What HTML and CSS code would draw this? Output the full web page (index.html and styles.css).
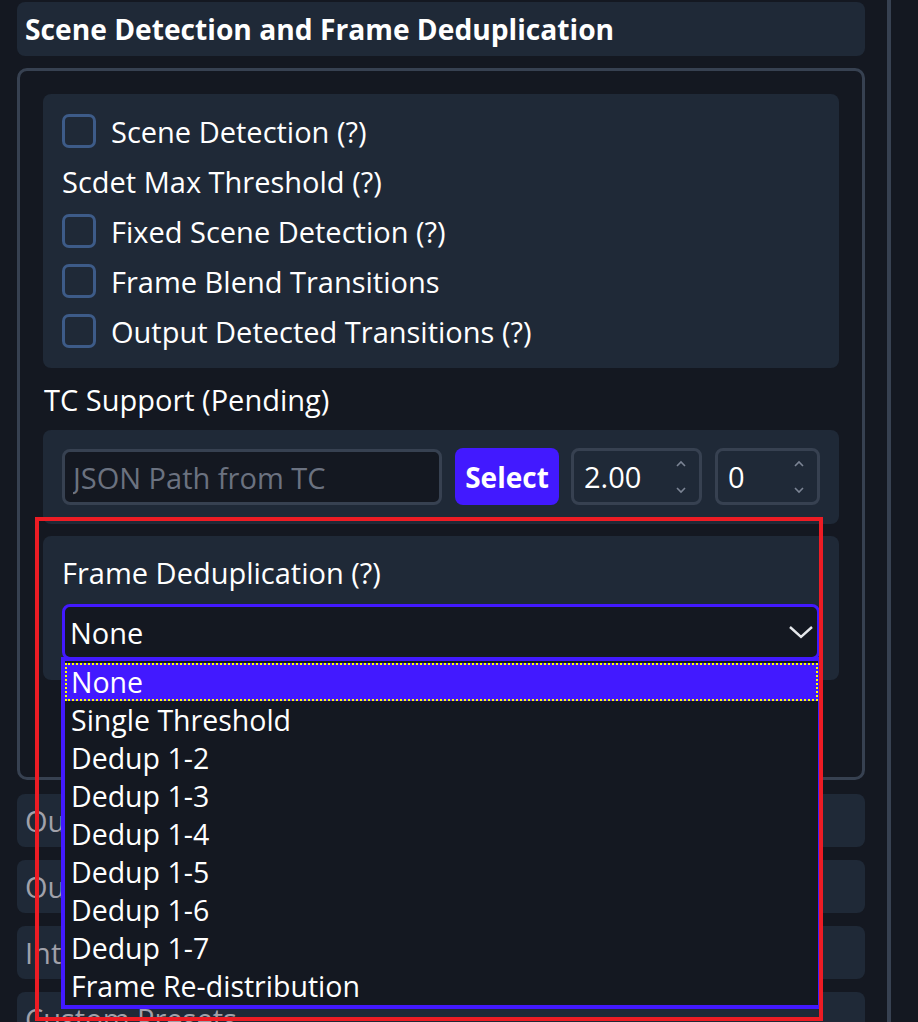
FILE: index.html
```html
<!DOCTYPE html>
<html lang="en">
<head>
<meta charset="utf-8">
<title>Scene Detection and Frame Deduplication</title>
<link rel="stylesheet" href="styles.css">
</head>
<body>
<div class="app">
  <main class="main">
    <div class="section-title">Scene Detection and Frame Deduplication</div>
    <section class="section">
      <div class="panel panel-checks">
        <label class="row"><input type="checkbox" class="cb"><span>Scene Detection (?)</span></label>
        <div class="row">Scdet Max Threshold (?)</div>
        <label class="row"><input type="checkbox" class="cb"><span>Fixed Scene Detection (?)</span></label>
        <label class="row"><input type="checkbox" class="cb"><span>Frame Blend Transitions</span></label>
        <label class="row"><input type="checkbox" class="cb"><span>Output Detected Transitions (?)</span></label>
      </div>
      <div class="out-label">TC Support (Pending)</div>
      <div class="panel panel-tc">
        <input class="text-input" type="text" placeholder="JSON Path from TC">
        <button class="btn">Select</button>
        <div class="num num-a">
          <span class="num-val">2.00</span>
          <svg class="spin" width="12" height="34" viewBox="0 0 12 34"><path d="M2 6 L6 2 L10 6" fill="none" stroke="#7b8494" stroke-width="1.6"/><path d="M2 28 L6 32 L10 28" fill="none" stroke="#7b8494" stroke-width="1.6"/></svg>
        </div>
        <div class="num num-b">
          <span class="num-val">0</span>
          <svg class="spin" width="12" height="34" viewBox="0 0 12 34"><path d="M2 6 L6 2 L10 6" fill="none" stroke="#7b8494" stroke-width="1.6"/><path d="M2 28 L6 32 L10 28" fill="none" stroke="#7b8494" stroke-width="1.6"/></svg>
        </div>
      </div>
      <div class="panel panel-dedup">
        <div class="dedup-label">Frame Deduplication (?)</div>
        <div class="select">
          <span class="select-val">None</span>
          <svg class="chev" width="28" height="16" viewBox="0 0 28 16"><path d="M3 3 L14 13 L25 3" fill="none" stroke="#e5e7eb" stroke-width="2.4"/></svg>
          <ul class="listbox">
            <li class="opt active">None</li>
            <li class="opt">Single Threshold</li>
            <li class="opt">Dedup 1-2</li>
            <li class="opt">Dedup 1-3</li>
            <li class="opt">Dedup 1-4</li>
            <li class="opt">Dedup 1-5</li>
            <li class="opt">Dedup 1-6</li>
            <li class="opt">Dedup 1-7</li>
            <li class="opt">Frame Re-distribution</li>
          </ul>
        </div>
      </div>
    </section>
    <div class="collapsed first">Output Settings</div>
    <div class="collapsed">Output Encoding</div>
    <div class="collapsed">Interpolation Settings</div>
    <div class="collapsed">Custom Presets</div>
  </main>
  <div class="rail"></div>
</div>
<div class="annotation"></div>
</body>
</html>
```

FILE: styles.css
```css
html, body {
  margin: 0;
  padding: 0;
  height: 100%;
  overflow: hidden;
  background: #141821;
  color: #ffffff;
  font-family: "Open Sans", "Noto Sans", sans-serif;
  font-size: 29px;
}

.app {
  display: flex;
  height: 100%;
}

.main {
  width: 848px;
  margin-left: 17px;
  padding-top: 2px;
  flex: none;
}

.rail {
  margin-left: 22px;
  width: 4px;
  background: #374151;
  height: 100%;
  flex: none;
}

.section-title {
  height: 54px;
  background: #1f2937;
  border-radius: 8px;
  padding-left: 8px;
  display: flex;
  align-items: center;
  font-weight: 700;
  font-size: 28.2px;
}

.section {
  margin-top: 12px;
  border: 3px solid #374151;
  border-radius: 10px;
  padding: 23px 23px 97px 23px;
}

.panel {
  background: #1f2937;
  border-radius: 8px;
}

.panel-checks {
  padding: 12px 19px 12px 19px;
}

.row {
  display: flex;
  align-items: center;
  height: 50px;
}

.cb {
  appearance: none;
  -webkit-appearance: none;
  margin: 0 15px 0 0;
  width: 34px;
  height: 34px;
  border: 3px solid #3d5b88;
  border-radius: 7px;
  background: transparent;
  box-sizing: border-box;
}

.out-label {
  height: 38px;
  line-height: 38px;
  margin: 13px 0 11px 1px;
}

.panel-tc {
  display: flex;
  align-items: center;
  padding: 18px 19px 19px 19px;
  height: 57px;
}

.text-input {
  appearance: none;
  box-sizing: border-box;
  width: 380px;
  height: 56px;
  margin-top: 1px;
  border: 3px solid #374151;
  border-radius: 8px;
  background: #141821;
  color: #ffffff;
  font-family: inherit;
  font-size: 29px;
  padding: 0 8px;
  outline: none;
}

.text-input::placeholder {
  color: #6b7280;
}

.btn {
  margin-left: 13px;
  width: 104px;
  height: 57px;
  border: none;
  border-radius: 8px;
  background: #4219ff;
  color: #ffffff;
  font-family: inherit;
  font-weight: 700;
  font-size: 28px;
  padding: 0;
}

.num {
  box-sizing: border-box;
  height: 57px;
  border: 3px solid #374151;
  border-radius: 8px;
  display: flex;
  align-items: center;
  justify-content: space-between;
  padding: 0 12px 0 10px;
}

.num-a {
  margin-left: 12px;
  width: 131px;
}

.num-b {
  margin-left: 13px;
  width: 105px;
}

.spin {
  display: block;
}

.panel-dedup {
  margin-top: 12px;
  padding: 18px 19px 20px 19px;
}

.dedup-label {
  height: 38px;
  line-height: 38px;
  margin-bottom: 12px;
}

.select {
  position: relative;
  box-sizing: border-box;
  height: 56px;
  border: 3px solid #4219ff;
  border-radius: 8px;
  background: #141821;
  display: flex;
  align-items: center;
  justify-content: space-between;
  padding: 0 2px 0 5px;
}

.chev {
  display: block;
}

.listbox {
  position: absolute;
  left: -4px;
  right: -5px;
  top: 100%;
  margin: 0;
  padding: 2px 0 0 0;
  list-style: none;
  background: #141821;
  border: 4px solid #4219ff;
  z-index: 5;
}

.opt {
  height: 38px;
  line-height: 38px;
  padding-left: 6px;
  font-size: 28.5px;
}

.opt.active {
  background: #4219ff;
  outline: 2px dotted #ffff00;
  outline-offset: -2px;
}

.collapsed {
  margin-top: 13px;
  height: 53px;
  background: #1f2937;
  border-radius: 8px;
  padding-left: 8px;
  display: flex;
  align-items: center;
  color: #a1a1aa;
}

.collapsed.first {
  margin-top: 14px;
}

.annotation {
  position: absolute;
  left: 35px;
  top: 517px;
  width: 788px;
  height: 504px;
  box-sizing: border-box;
  border: 4px solid #ed1c24;
  z-index: 10;
  pointer-events: none;
}
```
